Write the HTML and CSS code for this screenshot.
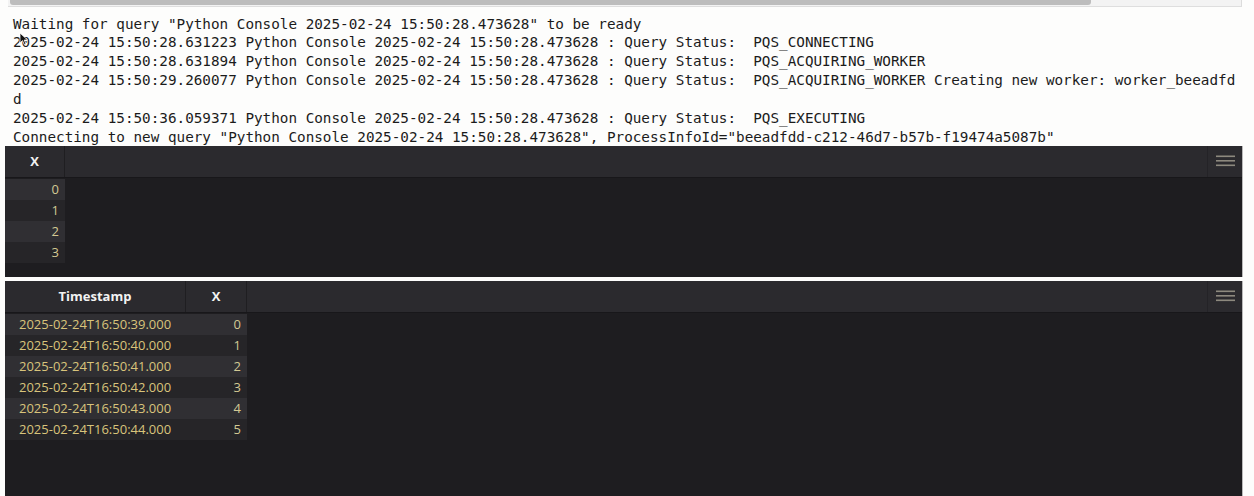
FILE: index.html
```html
<!DOCTYPE html>
<html>
<head>
<meta charset="utf-8">
<link rel="stylesheet" href="styles.css">
</head>
<body>
<div class="page">
  <div class="hscroll"><div class="thumb"></div></div>
  <div class="console">
    <div class="line">Waiting for query "Python Console 2025-02-24 15:50:28.473628" to be ready</div>
    <div class="line">2025-02-24 15:50:28.631223 Python Console 2025-02-24 15:50:28.473628 : Query Status:  PQS_CONNECTING</div>
    <div class="line">2025-02-24 15:50:28.631894 Python Console 2025-02-24 15:50:28.473628 : Query Status:  PQS_ACQUIRING_WORKER</div>
    <div class="line">2025-02-24 15:50:29.260077 Python Console 2025-02-24 15:50:28.473628 : Query Status:  PQS_ACQUIRING_WORKER Creating new worker: worker_beeadfd</div>
    <div class="line">d</div>
    <div class="line">2025-02-24 15:50:36.059371 Python Console 2025-02-24 15:50:28.473628 : Query Status:  PQS_EXECUTING</div>
    <div class="line">Connecting to new query "Python Console 2025-02-24 15:50:28.473628", ProcessInfoId="beeadfdd-c212-46d7-b57b-f19474a5087b"</div>
    <svg class="cursor" width="10" height="14" viewBox="0 0 10 14"><path d="M1 1 L1 11 L3.5 8.6 L5.4 12.8 L7 12 L5.2 8 L8.6 8 Z" fill="#111" stroke="#fff" stroke-width="0.8"/></svg>
  </div>

  <div class="panel panel-a">
    <div class="grid-head">
      <div class="hcell w60">X</div>
      <div class="hfill"></div>
      <div class="menu"><svg width="19" height="12" viewBox="0 0 19 12"><rect x="0" y="0.5" width="19" height="1.6" fill="#8d897e"/><rect x="0" y="5" width="19" height="1.6" fill="#8d897e"/><rect x="0" y="9.5" width="19" height="1.6" fill="#8d897e"/></svg></div>
    </div>
    <div class="grid-body">
      <div class="row odd"><div class="cell num w60">0</div></div>
      <div class="row"><div class="cell num w60">1</div></div>
      <div class="row odd"><div class="cell num w60">2</div></div>
      <div class="row"><div class="cell num w60">3</div></div>
    </div>
  </div>

  <div class="panel panel-b">
    <div class="grid-head">
      <div class="hcell w181">Timestamp</div>
      <div class="hcell w61">X</div>
      <div class="hfill"></div>
      <div class="menu"><svg width="19" height="12" viewBox="0 0 19 12"><rect x="0" y="0.5" width="19" height="1.6" fill="#8d897e"/><rect x="0" y="5" width="19" height="1.6" fill="#8d897e"/><rect x="0" y="9.5" width="19" height="1.6" fill="#8d897e"/></svg></div>
    </div>
    <div class="grid-body">
      <div class="row odd"><div class="cell ts w181">2025-02-24T16:50:39.000</div><div class="cell num w61">0</div></div>
      <div class="row"><div class="cell ts w181">2025-02-24T16:50:40.000</div><div class="cell num w61">1</div></div>
      <div class="row odd"><div class="cell ts w181">2025-02-24T16:50:41.000</div><div class="cell num w61">2</div></div>
      <div class="row"><div class="cell ts w181">2025-02-24T16:50:42.000</div><div class="cell num w61">3</div></div>
      <div class="row odd"><div class="cell ts w181">2025-02-24T16:50:43.000</div><div class="cell num w61">4</div></div>
      <div class="row"><div class="cell ts w181">2025-02-24T16:50:44.000</div><div class="cell num w61">5</div></div>
    </div>
  </div>
</div>
</body>
</html>
```

FILE: styles.css
```css
html, body {
  margin: 0;
  padding: 0;
  background: #fdfdfc;
}
.page {
  width: 1254px;
  height: 496px;
  overflow: hidden;
}
.hscroll {
  margin-left: 8px;
  width: 1234px;
  height: 7px;
  background: #f3f3f3;
  border-bottom: 1px solid #dedede;
  border-right: 1px solid #dcdcdc;
  box-sizing: border-box;
}
.thumb {
  margin-left: 2px;
  width: 1081px;
  height: 5px;
  background: #bdbdbd;
  border-radius: 0 0 3px 3px;
}
.console {
  position: relative;
  padding: 7.6px 0 0 13px;
  height: 131.4px;
  font-family: "DejaVu Sans Mono", "Liberation Mono", monospace;
  font-size: 14.3px;
  line-height: 18.83px;
  color: #1b1b1b;
}
.line {
  white-space: pre;
}
.cursor {
  position: absolute;
  left: 19px;
  top: 25px;
}
.panel {
  margin-left: 5px;
  width: 1237px;
  background: #1e1d20;
  display: flex;
  flex-direction: column;
  font-family: "Open Sans", "Noto Sans", sans-serif;
  font-size: 13px;
  border-right: 1px solid #b9b9b9;
}
.panel-a {
  height: 131px;
}
.panel-b {
  margin-top: 4px;
  height: 215px;
}
.grid-head {
  display: flex;
  height: 32px;
  background: #2b2a2e;
  border-bottom: 1px solid #18171a;
  box-sizing: border-box;
}
.hcell {
  display: flex;
  align-items: center;
  justify-content: center;
  color: #f2f2f2;
  font-weight: 700;
  border-right: 1px solid #1f1e21;
  box-sizing: border-box;
}
.hfill {
  flex: 1;
}
.menu {
  width: 34px;
  border-left: 1px solid #242327;
  display: flex;
  align-items: center;
  justify-content: center;
}
.w60 { width: 60px; }
.w181 { width: 181px; }
.w61 { width: 61px; }
.grid-body {
  display: flex;
  flex-direction: column;
  padding-top: 1px;
}
.row {
  display: flex;
  height: 21px;
}
.cell {
  height: 21px;
  line-height: 21px;
  background: #262528;
  box-sizing: border-box;
}
.row.odd .cell {
  background: #302f33;
}
.num {
  text-align: right;
  padding-right: 6px;
  color: #d3c993;
}
.ts {
  padding-left: 14px;
  color: #d9c47b;
}
```
